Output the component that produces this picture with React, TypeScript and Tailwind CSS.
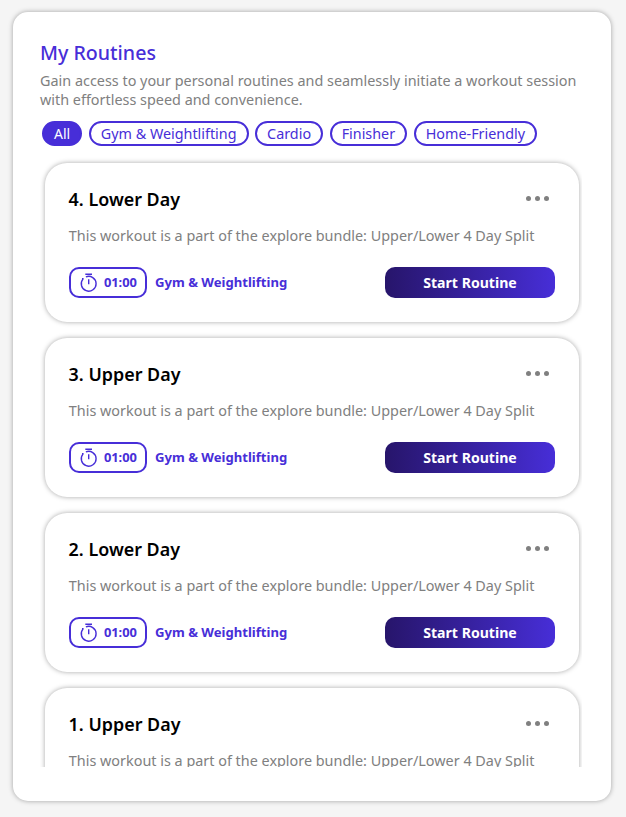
const filters = ["All", "Gym & Weightlifting", "Cardio", "Finisher", "Home-Friendly"];
const routines = ["4. Lower Day", "3. Upper Day", "2. Lower Day", "1. Upper Day"];

function Stopwatch() {
  return (
    <svg width="18" height="20" viewBox="0 0 18 20" fill="none" stroke="#472ed8" strokeWidth="1.4">
      <path d="M3 5.6h1.6M4.1 5.9A7.4 7.4 0 1 0 6.9 3.9" />
      <path d="M9.7 6.3v5M6.3 1.2h6.7" />
    </svg>
  );
}

function RoutineCard({ title }: { title: string }) {
  return (
    <article className="flex h-[159px] shrink-0 flex-col rounded-[22px] bg-white px-6 pt-6 shadow-[0_0_5px_rgba(0,0,0,0.35)]">
      <div className="flex h-6 items-center justify-between">
        <h2 className="-ml-[0.4px] text-[17.9px] font-semibold text-black">{title}</h2>
        <div className="mr-[6px] mb-[2px] flex gap-1">
          <i className="size-[5px] rounded-full bg-[#808080]" />
          <i className="size-[5px] rounded-full bg-[#808080]" />
          <i className="size-[5px] rounded-full bg-[#808080]" />
        </div>
      </div>
      <p className="mt-[15px] -ml-[0.2px] text-[14.4px] leading-5 whitespace-nowrap text-[#808080]">This workout is a part of the explore bundle: Upper/Lower 4 Day Split</p>
      <div className="mt-[21px] flex h-[31px] items-center">
        <div className="flex h-[31px] w-[78px] items-center justify-between rounded-[10px] border-2 border-[#472ed8] px-2 text-[12.9px] font-bold text-[#472ed8]">
          <Stopwatch />
          <span>01:00</span>
        </div>
        <span className="ml-2 text-[13.1px] font-bold text-[#472ed8]">Gym &amp; Weightlifting</span>
        <button className="ml-auto h-[31px] w-[170px] rounded-[10px] bg-linear-to-r from-[#27156b] to-[#472ed8] text-[14.1px] font-bold text-white">Start Routine</button>
      </div>
    </article>
  );
}

export default function App() {
  return (
    <div className="h-[817px] w-[626px] bg-[#f5f5f5] px-[13px] pt-3 font-['Noto_Sans',sans-serif]">
      <main className="h-[789px] w-[598px] rounded-[15px] bg-white px-[27px] pt-7 shadow-[0_0_5px_rgba(0,0,0,0.35)]">
        <h1 className="text-[19.6px] leading-[26px] font-medium text-[#472ed8]">My Routines</h1>
        <p className="mt-[5px] text-[14.4px] leading-[19px] text-[#808080]">Gain access to your personal routines and seamlessly initiate a workout session with effortless speed and convenience.</p>
        <nav className="mt-3 ml-0.5 flex gap-[6.6px]">
          {filters.map((label, index) => (
            <button key={label} className={`h-[25px] rounded-full border-2 border-[#472ed8] px-[10px] leading-5 font-normal whitespace-nowrap ${index === 0 ? "bg-[#472ed8] text-[14px] text-white" : "text-[14.35px] text-[#472ed8]"}`}>{label}</button>
          ))}
        </nav>
        <section className="mt-[11px] flex h-[610px] w-[542px] flex-col gap-4 overflow-hidden pt-[6px] pr-[3px] pl-[5px]">
          {routines.map((title) => <RoutineCard key={title} title={title} />)}
        </section>
      </main>
    </div>
  );
}
